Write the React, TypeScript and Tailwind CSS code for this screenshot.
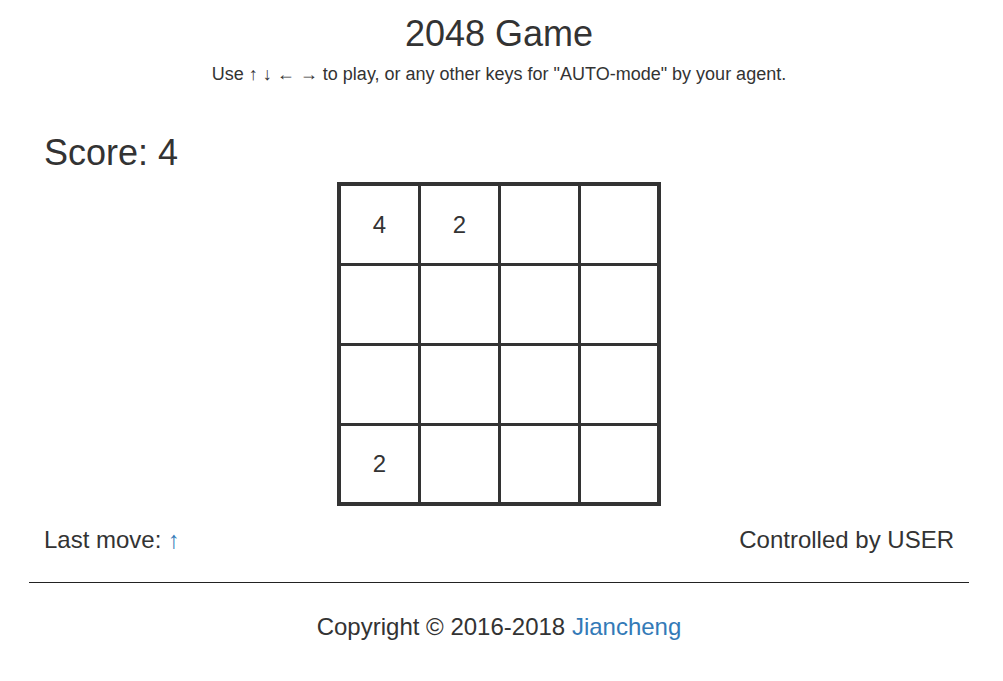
const BOARD: (number | null)[][] = [
  [4, 2, null, null],
  [null, null, null, null],
  [null, null, null, null],
  [2, null, null, null],
];

function Board({ cells }: { cells: (number | null)[][] }) {
  return (
    <div className="grid grid-cols-[77px_77px_77px_76px] grid-rows-[77px_77px_77px_76px] gap-[3px] bg-[#333] p-[4px]">
      {cells.flat().map((v, i) => (
        <div key={i} className="flex items-center justify-center bg-white text-[24px] leading-none">
          {v ?? ''}
        </div>
      ))}
    </div>
  );
}

export default function App() {
  return (
    <div className="min-h-[681px] bg-white text-[#333]" style={{ fontFamily: '"Liberation Sans", Arial, sans-serif' }}>
      <div className="ml-[29px] w-[940px]">
        {/* Header */}
        <h1 className="pt-[14px] text-center text-[36px] leading-[40px]">2048 Game</h1>
        <p className="mt-[8px] text-center text-[18px] leading-[24px]">
          Use ↑ ↓ ← → to play, or any other keys for "AUTO-mode" by your agent.
        </p>

        {/* Score */}
        <div className="mt-[47px] px-[15px] text-[36px] leading-[40px]">Score: 4</div>

        {/* Board */}
        <div className="mt-[9px] flex justify-center">
          <Board cells={BOARD} />
        </div>

        {/* Status row */}
        <div className="mt-[18px] flex items-center justify-between px-[15px] text-[24px] leading-[32px]">
          <span>
            Last move: <span className="text-[#337ab7]">↑</span>
          </span>
          <span>Controlled by USER</span>
        </div>

        <hr className="mt-[26px] border-t border-[#222]" />

        {/* Footer */}
        <footer className="mt-[28px] text-center text-[24px] leading-[32px]">
          Copyright © 2016-2018 <a className="text-[#337ab7]" href="#">Jiancheng</a>
        </footer>
      </div>
    </div>
  );
}
